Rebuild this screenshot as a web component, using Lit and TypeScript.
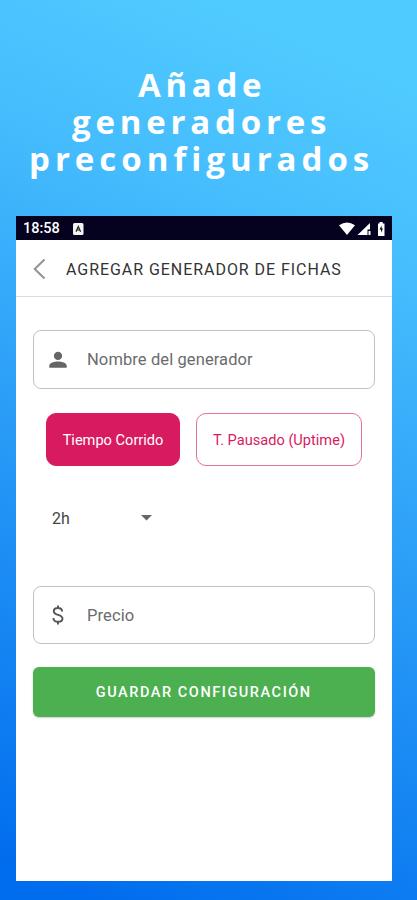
import { LitElement, html, css } from "lit";
import { customElement } from "lit/decorators.js";

@customElement("app-root")
export class AppRoot extends LitElement {
  static styles = css`
    :host { display: block; width: 417px; height: 900px; overflow: hidden; font-family: Roboto, "Liberation Sans", sans-serif; }
    * { box-sizing: border-box; }
    svg { display: block; flex: none; }
    .promo { height: 900px; display: flex; flex-direction: column; background: linear-gradient(203deg, #50cbff 8%, #45bcfd 27%, #006cee 97%); }
    h1 { margin: 0; height: 216px; padding-top: 66px; color: #fff; font: 700 33px/37px "Open Sans", sans-serif; display: flex; flex-direction: column; }
    h1 span { white-space: pre; height: 37px; }
    .l1 { margin-left: 138px; letter-spacing: 4.7px; }
    .l2 { margin-left: 72px; letter-spacing: 4.8px; }
    .l3 { margin-left: 29px; letter-spacing: 5px; }
    .phone { margin-left: 16px; width: 375.5px; height: 665px; background: #fff; }
    .status { height: 24px; background: #05021f; color: #fff; display: flex; align-items: center; padding: 1px 7px 0 7px; }
    .time { font-size: 14.5px; font-weight: 500; width: 50px; }
    .sys { margin-left: auto; display: flex; align-items: center; }
    header { height: 57px; border-bottom: 1.5px solid #dcdcdc; display: flex; align-items: center; padding: 2px 0 0 17px; }
    h2 { margin: 0 0 0 19px; font-size: 16px; font-weight: 400; letter-spacing: .95px; color: #333; white-space: nowrap; }
    main { padding: 33px 17px 0; display: flex; flex-direction: column; }
    .field { height: 59px; border: 1.5px solid #c2c2c2; border-radius: 8px; display: flex; align-items: center; padding-left: 13px; color: #6b6b6b; font-size: 16.5px; letter-spacing: .1px; }
    .field .icon { width: 40px; }
    .choices { display: flex; gap: 16px; margin: 24px 0 0 13px; }
    .choice { height: 53px; padding-top: 1px; border: 1.3px solid #e5709a; border-radius: 10px; display: flex; align-items: center; justify-content: center; font-size: 14.6px; color: #d81b60; width: 166px; white-space: nowrap; }
    .choice.on { width: 134px; background: #d81b60; border-color: #d81b60; color: #fff; }
    .select { display: flex; align-items: center; justify-content: space-between; height: 40px; width: 100px; margin: 32px 0 48px 19px; font-size: 16px; color: #444; }
    .price { height: 58px; }
    .save { height: 50px; margin-top: 23px; border-radius: 6px; background: #4caf50; color: #fff; display: flex; align-items: center; justify-content: center; font-size: 14.5px; font-weight: 500; letter-spacing: 1.55px; box-shadow: 0 1px 2px #0003; }
  `;

  render() {
    return html`
      <div class="promo">
        <h1><span class="l1">Añade</span><span class="l2">generadores</span><span class="l3">preconfigurados</span></h1>
        <section class="phone">
          <div class="status">
            <span class="time">18:58</span>
            <svg width="11" height="12" viewBox="0 0 11 12"><rect width="10.5" height="12" rx="1.5" fill="#f2f2f2"/><path d="M3 8.7 5.3 3.5 7.6 8.7M3.8 7h3" fill="none" stroke="#222" stroke-width="1.2"/></svg>
            <div class="sys">
              <svg width="46" height="16" viewBox="0 0 46 16" fill="#fff">
                <path d="M0 4.3Q8 -1.500 16 4.3L8 14Z"/>
                <path d="M31 2V8.5H28.500V14H18.500ZM29.500 10h2v4h-2z"/>
                <path d="M39 2.500h1.500V1h3.200v1.500H45.500V15H39Z"/>
                <path d="M42.500 4.500 40.500 8.500h1.500v3.200L44 7.500h-1.300Z" fill="#05021f"/>
              </svg>
            </div>
          </div>
          <header>
            <svg width="14" height="22" viewBox="0 0 14 22"><path d="M11.500 1.500 1.700 11 11.500 20.500" fill="none" stroke="#929292" stroke-width="2"/></svg>
            <h2>AGREGAR GENERADOR DE FICHAS</h2>
          </header>
          <main>
            <div class="field">
              <div class="icon"><svg width="22" height="22" viewBox="0 0 24 24" fill="#666"><path d="M12 12a4.500 4.500 0 1 0 0-9 4.500 4.500 0 0 0 0 9ZM2.500 20.500V18c0-3 6-4.500 9.500-4.500s9.500 1.500 9.500 4.500v2.500Z"/></svg></div>
              <span>Nombre del generador</span>
            </div>
            <div class="choices">
              <div class="choice on">Tiempo Corrido</div>
              <div class="choice">T. Pausado (Uptime)</div>
            </div>
            <div class="select"><span>2h</span><svg width="11" height="6" viewBox="0 0 11 6"><path d="M0 0h11L5.500 5.500Z" fill="#666"/></svg></div>
            <div class="field price">
              <div class="icon"><svg width="22" height="22" viewBox="0 0 22 22" fill="none" stroke="#555" stroke-width="1.900"><path d="M15.200 7.500C15 5.300 13.500 4 11 4 8.500 4 6.800 5.300 6.800 7.200c0 4.600 8.700 2.700 8.700 7.300 0 2-1.700 3.300-4.400 3.300-2.800 0-4.600-1.400-4.700-3.800M11 1.500V4M11 17.800v2.700"/></svg></div>
              <span>Precio</span>
            </div>
            <div class="save">GUARDAR CONFIGURACIÓN</div>
          </main>
        </section>
      </div>`;
  }
}
